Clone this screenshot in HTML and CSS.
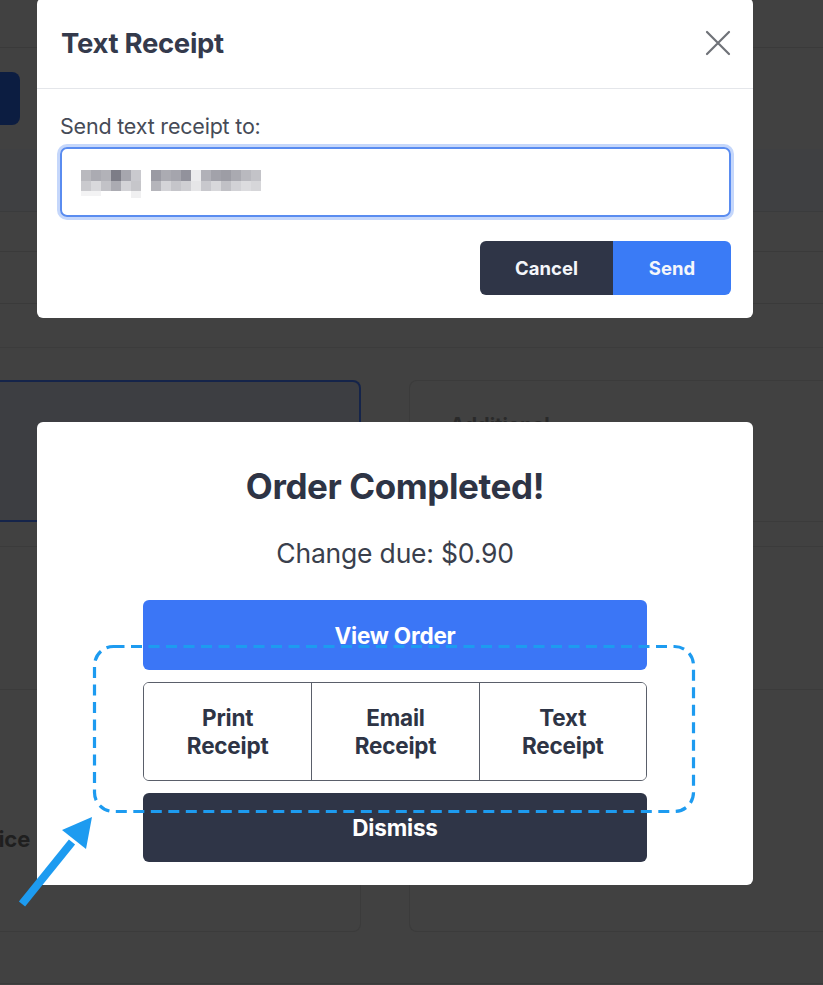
FILE: index.html
```html
<!DOCTYPE html>
<html lang="en">
<head>
<meta charset="utf-8">
<title>Order Completed</title>
<link rel="stylesheet" href="styles.css">
</head>
<body>
<div class="app">
  <div class="topbar"></div>
  <div class="toolbar">
    <div class="nav-btn"></div>
    <div class="band"></div>
  </div>
  <div class="row r1"></div>
  <div class="row r2"></div>
  <div class="row r3"></div>
  <div class="cards">
    <div class="card selected"></div>
    <div class="card"><span class="card-label">Additional</span></div>
    <div class="card tall">
      <div class="card-split"></div>
      <span class="card-strong">Price</span>
      <span class="dot"></span>
    </div>
    <div class="card tall"><div class="card-split right"></div></div>
  </div>
  <div class="row footer"></div>

  <div class="modal text-modal">
    <div class="modal-header">
      <h2 class="modal-title">Text Receipt</h2>
      <button class="close-btn" aria-label="Close">
        <svg width="26" height="26" viewBox="0 0 26 26"><path d="M2 2 L24 24 M24 2 L2 24" stroke="#6f7278" stroke-width="2.2" stroke-linecap="round" fill="none"/></svg>
      </button>
    </div>
    <div class="modal-body">
      <label class="field-label">Send text receipt to:</label>
      <div class="input">
        <svg class="mosaic" width="182" height="28" viewBox="0 0 182 28">
          <g>
            <rect x="0" y="0" width="10" height="11" fill="#b9b9be"/>
            <rect x="10" y="0" width="10" height="11" fill="#ababb2"/>
            <rect x="20" y="0" width="10" height="11" fill="#b2b2b8"/>
            <rect x="30" y="0" width="10" height="11" fill="#7d7d87"/>
            <rect x="40" y="0" width="10" height="11" fill="#a6a6ae"/>
            <rect x="50" y="0" width="10" height="11" fill="#c9c9ce"/>
            <rect x="0" y="11" width="10" height="10" fill="#cacace"/>
            <rect x="10" y="11" width="10" height="10" fill="#d9d9dc"/>
            <rect x="20" y="11" width="10" height="10" fill="#c2c2c7"/>
            <rect x="30" y="11" width="10" height="10" fill="#ababb2"/>
            <rect x="40" y="11" width="10" height="10" fill="#d3d3d7"/>
            <rect x="50" y="11" width="10" height="10" fill="#c6c6ca"/>
            <rect x="0" y="21" width="20" height="5" fill="#f3f3f4"/>
            <rect x="50" y="21" width="10" height="7" fill="#f0f0f1"/>
          </g>
          <g transform="translate(70 0)">
            <rect x="0" y="0" width="10" height="11" fill="#9a9aa3"/>
            <rect x="10" y="0" width="10" height="11" fill="#ababb2"/>
            <rect x="20" y="0" width="10" height="11" fill="#a5a5ad"/>
            <rect x="30" y="0" width="10" height="11" fill="#92929c"/>
            <rect x="40" y="0" width="10" height="11" fill="#ececee"/>
            <rect x="50" y="0" width="10" height="11" fill="#b1b1b8"/>
            <rect x="60" y="0" width="10" height="11" fill="#a2a2aa"/>
            <rect x="70" y="0" width="10" height="11" fill="#9d9da5"/>
            <rect x="80" y="0" width="10" height="11" fill="#aaaab1"/>
            <rect x="90" y="0" width="10" height="11" fill="#b9b9bf"/>
            <rect x="100" y="0" width="10" height="11" fill="#c3c3c8"/>
            <rect x="0" y="11" width="10" height="10" fill="#b5b5bb"/>
            <rect x="10" y="11" width="10" height="10" fill="#d4d4d8"/>
            <rect x="20" y="11" width="10" height="10" fill="#c5c5ca"/>
            <rect x="30" y="11" width="10" height="10" fill="#cfcfd3"/>
            <rect x="40" y="11" width="10" height="10" fill="#e6e6e8"/>
            <rect x="50" y="11" width="10" height="10" fill="#c8c8cd"/>
            <rect x="60" y="11" width="10" height="10" fill="#d8d8db"/>
            <rect x="70" y="11" width="10" height="10" fill="#c1c1c6"/>
            <rect x="80" y="11" width="10" height="10" fill="#d2d2d6"/>
            <rect x="90" y="11" width="10" height="10" fill="#dcdcdf"/>
            <rect x="100" y="11" width="10" height="10" fill="#d6d6d9"/>
          </g>
        </svg>
      </div>
      <div class="actions">
        <div class="btn-group">
          <button class="btn btn-dark">Cancel</button>
          <button class="btn btn-blue">Send</button>
        </div>
      </div>
    </div>
  </div>

  <div class="modal done-modal">
    <h1 class="done-title">Order Completed!</h1>
    <p class="change">Change due: $0.90</p>
    <div class="done-actions">
      <button class="wide-btn primary">View Order</button>
      <div class="receipt-group">
        <button class="receipt-btn">Print<br>Receipt</button>
        <button class="receipt-btn">Email<br>Receipt</button>
        <button class="receipt-btn">Text<br>Receipt</button>
      </div>
      <button class="wide-btn dark">Dismiss</button>
    </div>
  </div>

  <svg class="annotation" width="823" height="985" viewBox="0 0 823 985">
    <rect x="94.5" y="646.5" width="599" height="165" rx="19" ry="19" fill="none" stroke="#1d9bf0" stroke-width="3.2" stroke-dasharray="11 6.5"/>
    <line x1="22" y1="904" x2="72" y2="842" stroke="#1d9bf0" stroke-width="8"/>
    <polygon points="92,817 62,830 86,849" fill="#1d9bf0"/>
  </svg>
</div>
</body>
</html>
```

FILE: styles.css
```css
* { box-sizing: border-box; }

html, body {
  margin: 0;
  padding: 0;
  background: #414141;
  font-family: Inter, "Noto Sans", "Liberation Sans", sans-serif;
}

.app {
  position: relative;
  width: 823px;
  height: 985px;
  overflow: hidden;
  background: #414141;
}

/* dimmed background app */
.topbar {
  height: 48px;
  border-bottom: 1px solid #3a3a3a;
}

.toolbar {
  height: 164px;
  border-bottom: 1px solid #3a3b3c;
  display: flex;
  flex-direction: column;
  justify-content: space-between;
  padding-top: 24px;
}

.nav-btn {
  width: 20px;
  height: 53px;
  background: #0c1d41;
  border-radius: 0 8px 8px 0;
}

.band {
  height: 62px;
  background: #3f4042;
}

.row {
  border-bottom: 1px solid #3a3a3a;
}
.r1 { height: 40px; }
.r2 { height: 52px; }
.r3 { height: 44px; border-bottom-color: #3c3c3c; }

.cards {
  margin-top: 32px;
  display: grid;
  grid-template-columns: 361px 1fr;
  grid-template-rows: 142px 386px;
  column-gap: 48px;
  row-gap: 24px;
}

.card {
  position: relative;
  border: 1px solid #3b3b3b;
  border-radius: 8px;
  padding: 30px 40px;
}

.card:nth-child(odd) {
  border-left: none;
  border-radius: 0 8px 8px 0;
}

.card:nth-child(even) {
  border-right: none;
  border-radius: 8px 0 0 8px;
}

.card.selected {
  background: #3d3e42;
  border: 2px solid #15244a;
  border-left: none;
}

.card-label {
  display: block;
  margin-top: 2px;
  font-size: 20px;
  font-weight: 700;
  color: #2a2a2a;
}

.card.tall { padding: 0; display: flex; flex-direction: column; }

.card-split {
  height: 143px;
  border-bottom: 1px solid #3b3b3b;
}

.card-strong {
  margin-top: 136px;
  margin-left: -25px;
  font-size: 22px;
  font-weight: 700;
  color: #1f1f1f;
}

.dot {
  align-self: flex-end;
  width: 32px;
  height: 32px;
  margin: 0 40px 0 0;
  border-radius: 50%;
  background: #2f2740;
}

.footer {
  height: 52px;
  border-bottom-color: #3a3a3a;
}

/* modals */
.modal {
  position: absolute;
  left: 37px;
  width: 716px;
  background: #ffffff;
  border-radius: 6px;
}

.text-modal {
  top: -2px;
  height: 320px;
}

.modal-header {
  height: 91px;
  border-bottom: 1px solid #e4e6ea;
  display: flex;
  align-items: center;
  justify-content: space-between;
  padding: 0 22px 0 24px;
}

.modal-title {
  margin: 0;
  font-size: 27.5px;
  font-weight: 700;
  color: #343a4c;
  letter-spacing: -0.3px;
}

.close-btn {
  border: none;
  background: none;
  padding: 0;
  width: 26px;
  height: 26px;
  display: flex;
}

.modal-body {
  padding: 24px 22px 0 23px;
  display: flex;
  flex-direction: column;
}

.field-label {
  font-size: 21.5px;
  color: #464b57;
  line-height: 26px;
  letter-spacing: -0.2px;
}

.input {
  margin-top: 8px;
  height: 70px;
  border: 2px solid #5a8cf0;
  border-radius: 7px;
  box-shadow: 0 0 0 3px #c5d7fb;
  display: flex;
  align-items: center;
  padding: 4px 0 0 19px;
}

.mosaic { display: block; }

.actions {
  margin-top: 24px;
  display: flex;
  justify-content: flex-end;
}

.btn-group {
  display: flex;
  border-radius: 6px;
  overflow: hidden;
}

.btn {
  border: none;
  height: 54px;
  font-family: inherit;
  font-size: 18.5px;
  font-weight: 700;
  color: #f4f6fa;
}

.btn-dark { width: 133px; background: #2f3547; }
.btn-blue { width: 118px; background: #3a7bf6; }

.done-modal {
  top: 422px;
  height: 463px;
  padding: 40px 106px 0;
  display: flex;
  flex-direction: column;
  align-items: stretch;
  text-align: center;
}

.done-title {
  margin: 0;
  font-size: 35px;
  line-height: 48px;
  font-weight: 700;
  color: #2e3445;
  letter-spacing: -0.4px;
}

.change {
  margin: 27px 0 0;
  font-size: 26.5px;
  line-height: 32px;
  color: #3a3f4c;
  letter-spacing: -0.2px;
}

.done-actions {
  margin-top: 31px;
  display: flex;
  flex-direction: column;
  gap: 12px;
}

.wide-btn {
  height: 70px;
  border: none;
  border-radius: 6px;
  font-family: inherit;
  font-size: 22.5px;
  font-weight: 700;
  color: #ffffff;
  letter-spacing: -0.2px;
}

.wide-btn.primary { background: #3b76f6; }
.wide-btn.dark { background: #2f3547; height: 69px; }

.receipt-group {
  height: 99px;
  display: grid;
  grid-template-columns: 1fr 1fr 1fr;
  border: 1.5px solid #5a5f6a;
  border-radius: 6px;
  overflow: hidden;
}

.receipt-btn {
  border: none;
  background: #ffffff;
  font-family: inherit;
  font-size: 22.5px;
  line-height: 28px;
  font-weight: 700;
  color: #2e3445;
  letter-spacing: -0.2px;
  padding: 0;
}

.receipt-btn + .receipt-btn {
  border-left: 1.5px solid #5a5f6a;
}

.annotation {
  position: absolute;
  left: 0;
  top: 0;
  pointer-events: none;
}
```
